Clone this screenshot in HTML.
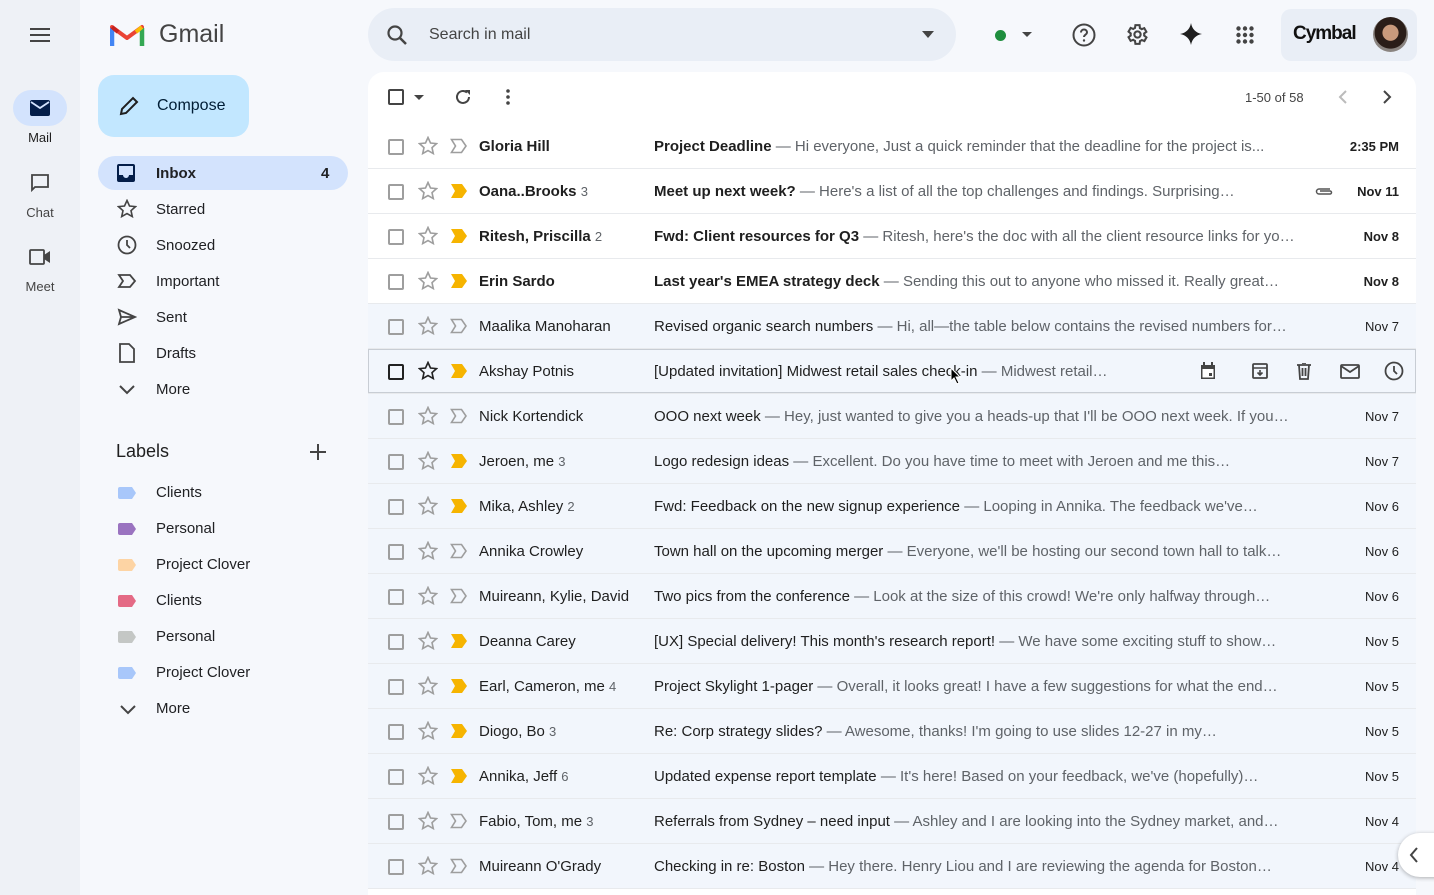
<!DOCTYPE html>
<html><head><meta charset="utf-8"><style>
*{box-sizing:border-box;margin:0;padding:0}
body{width:1434px;height:895px;overflow:hidden;background:#f6f8fc;font-family:"Liberation Sans",Arial,sans-serif;color:#1f1f1f;position:relative}
.rail{position:absolute;left:0;top:0;width:80px;height:895px;background:#eef1f6}
.abs{position:absolute}
.ri{position:absolute;left:0;width:80px;text-align:center;font-size:13px;color:#444}
.nav{position:absolute;left:98px;width:250px;height:34px;display:flex;align-items:center;font-size:15px;color:#202124;border-radius:17px}
.nav svg{position:absolute;left:19px}
.nav span{position:absolute;left:58px}
.main{position:absolute;left:368px;top:72px;width:1048px;height:823px;background:#fff;border-radius:16px 16px 0 0;overflow:hidden}
.row{position:absolute;left:0;width:1048px;height:45px;border-bottom:1px solid #e8eaed;font-size:15px;white-space:nowrap}
.row.rd{background:#f2f6fc}
.row>*{position:absolute;top:1px;line-height:44px}
.cb{left:20px;top:15px!important;width:16px;height:16px;border:2px solid #9e9e9e;border-radius:2px}
.st,.im{line-height:0!important}
.st{left:50px;top:12px!important}
.im{left:82px;top:14px!important}
.snd{left:111px;width:165px;overflow:hidden;color:#1f1f1f}
.sub{left:286px;overflow:hidden;text-overflow:ellipsis;color:#1f1f1f}
.sub i{font-style:normal;color:#5f6368}
.dt{right:17px;font-size:13px;color:#1f1f1f}
.ur .snd,.ur .sub b,.ur .dt{font-weight:bold}
.cnt{font-size:13px;color:#5f6368;font-weight:normal}
.lab{position:absolute;left:98px;width:250px;height:36px;font-size:15px;color:#202124}
.lab span{position:absolute;left:58px;top:9px}
.lab svg{position:absolute;left:20px;top:12px}
</style></head><body>
<div class="rail"></div>
<svg class="abs" style="left:29px;top:27px" width="22" height="16"><path d="M1 2h20M1 8h20M1 14h20" stroke="#444" stroke-width="2"/></svg>
<div class="abs" style="left:13px;top:90px;width:54px;height:36px;border-radius:18px;background:#d3e3fd"></div>
<svg class="abs" style="left:30px;top:100px" width="20" height="16"><rect x="0" y="0" width="20" height="16" rx="2" fill="#041e49"/><path d="M1 2l9 6 9-6" stroke="#d3e3fd" stroke-width="1.8" fill="none"/></svg>
<div class="ri" style="top:130px;color:#1f1f1f">Mail</div>
<svg class="abs" style="left:30px;top:173px" width="20" height="20"><path d="M2 2h16v12H5l-3 3z" fill="none" stroke="#444" stroke-width="1.8"/></svg>
<div class="ri" style="top:205px">Chat</div>
<svg class="abs" style="left:29px;top:249px" width="22" height="16"><rect x="1" y="1" width="14" height="14" rx="1" fill="none" stroke="#444" stroke-width="1.8"/><path d="M15 6l6-4v12l-6-4z" fill="#444"/></svg>
<div class="ri" style="top:279px">Meet</div>

<svg class="abs" style="left:110px;top:22px" width="35" height="26" viewBox="0 0 35 26"><path d="M2 24V5l15 11L32 5v19" fill="none" stroke="#ea4335" stroke-width="4" stroke-linejoin="round"/><path d="M2 24V6" stroke="#4285f4" stroke-width="4.5"/><path d="M32 24V6" stroke="#34a853" stroke-width="4.5"/><path d="M2 5l6 5" stroke="#c5221f" stroke-width="4"/><path d="M32 5l-6 5" stroke="#fbbc04" stroke-width="4"/></svg>
<div class="abs" style="left:159px;top:20px;font-size:25px;color:#444">Gmail</div>

<div class="abs" style="left:98px;top:75px;width:151px;height:62px;border-radius:16px;background:#c2e7ff"></div>
<svg class="abs" style="left:119px;top:96px" width="20" height="20"><path d="M2 18l1-5L14 2l4 4L7 17z" fill="none" stroke="#1f1f1f" stroke-width="2"/></svg>
<div class="abs" style="left:157px;top:97px;font-size:16px;color:#001d35">Compose</div>

<div class="nav" style="top:156px;background:#d3e3fd;font-weight:bold"><svg width="18" height="18" style="top:8px"><rect x="1" y="1" width="16" height="16" rx="1" fill="none" stroke="#041e49" stroke-width="2"/><path d="M1 11h5a3 3 0 006 0h5v6H1z" fill="#041e49"/></svg><span>Inbox</span><span style="left:223px">4</span></div>
<div class="nav" style="top:192px"><svg width="20" height="20" style="top:7px"><path d="M10 1.5l2.5 5.5 6 .6-4.5 4 1.3 6L10 14.6 4.7 17.6 6 11.6 1.5 7.6l6-.6z" fill="none" stroke="#444" stroke-width="1.6"/></svg><span>Starred</span></div>
<div class="nav" style="top:228px"><svg width="20" height="20" style="top:7px"><circle cx="10" cy="10" r="8.5" fill="none" stroke="#444" stroke-width="1.8"/><path d="M10 5v5l3 3" fill="none" stroke="#444" stroke-width="1.8"/></svg><span>Snoozed</span></div>
<div class="nav" style="top:264px"><svg width="20" height="20" style="top:7px"><path d="M2 4h11l5 6-5 6H2l4-6z" fill="none" stroke="#444" stroke-width="1.8"/></svg><span>Important</span></div>
<div class="nav" style="top:300px"><svg width="20" height="20" style="top:7px"><path d="M2 3l16 7-16 7 2-7z M4 10h14" fill="none" stroke="#444" stroke-width="1.8"/></svg><span>Sent</span></div>
<div class="nav" style="top:336px"><svg width="20" height="20" style="top:7px"><path d="M3 1h9l5 5v13H3z" fill="none" stroke="#444" stroke-width="1.8"/></svg><span>Drafts</span></div>
<div class="nav" style="top:372px"><svg width="20" height="20" style="top:8px"><path d="M3 6l7 7 7-7" fill="none" stroke="#444" stroke-width="2"/></svg><span>More</span></div>

<div class="abs" style="left:116px;top:441px;font-size:18px;color:#1f1f1f">Labels</div>
<svg class="abs" style="left:309px;top:443px" width="18" height="18"><path d="M9 1v16M1 9h16" stroke="#444" stroke-width="2"/></svg>
<div class="lab" style="top:475px"><svg width="20" height="12"><path d="M0 2a2 2 0 012-2h12l4 6-4 6H2a2 2 0 01-2-2z" fill="#a8c7fa"/></svg><span>Clients</span></div>
<div class="lab" style="top:511px"><svg width="20" height="12"><path d="M0 2a2 2 0 012-2h12l4 6-4 6H2a2 2 0 01-2-2z" fill="#9a73c0"/></svg><span>Personal</span></div>
<div class="lab" style="top:547px"><svg width="20" height="12"><path d="M0 2a2 2 0 012-2h12l4 6-4 6H2a2 2 0 01-2-2z" fill="#fdd4a4"/></svg><span>Project Clover</span></div>
<div class="lab" style="top:583px"><svg width="20" height="12"><path d="M0 2a2 2 0 012-2h12l4 6-4 6H2a2 2 0 01-2-2z" fill="#e46a85"/></svg><span>Clients</span></div>
<div class="lab" style="top:619px"><svg width="20" height="12"><path d="M0 2a2 2 0 012-2h12l4 6-4 6H2a2 2 0 01-2-2z" fill="#c4c7c5"/></svg><span>Personal</span></div>
<div class="lab" style="top:655px"><svg width="20" height="12"><path d="M0 2a2 2 0 012-2h12l4 6-4 6H2a2 2 0 01-2-2z" fill="#a8c7fa"/></svg><span>Project Clover</span></div>
<div class="lab" style="top:691px"><svg width="20" height="12" style="top:13px"><path d="M3 2l7 7 7-7" fill="none" stroke="#444" stroke-width="2"/></svg><span>More</span></div>

<div class="abs" style="left:368px;top:8px;width:588px;height:53px;border-radius:27px;background:#e9eef6"></div>
<svg class="abs" style="left:386px;top:24px" width="22" height="22"><circle cx="9" cy="9" r="6.5" fill="none" stroke="#444" stroke-width="2.2"/><path d="M14 14l6 6" stroke="#444" stroke-width="2.5"/></svg>
<div class="abs" style="left:429px;top:26px;font-size:16px;color:#444">Search in mail</div>
<svg class="abs" style="left:922px;top:31px" width="12" height="7"><path d="M0 0h12L6 7z" fill="#444"/></svg>
<div class="abs" style="left:995px;top:30px;width:11px;height:11px;border-radius:50%;background:#1e8e3e"></div>
<svg class="abs" style="left:1022px;top:32px" width="10" height="5"><path d="M0 0h10L5 5z" fill="#444"/></svg>
<svg class="abs" style="left:1072px;top:23px" width="24" height="24"><circle cx="12" cy="12" r="10.5" fill="none" stroke="#444" stroke-width="2"/><path d="M9 9.5a3 3 0 116 0c0 2-3 2.3-3 4.5" fill="none" stroke="#444" stroke-width="2"/><circle cx="12" cy="17.5" r="1.2" fill="#444"/></svg>
<svg class="abs" style="left:1125px;top:22px" width="25" height="25" viewBox="0 0 24 24"><path d="M19.4 13a7.5 7.5 0 000-2l2.1-1.6-2-3.5-2.5 1a7 7 0 00-1.7-1L15 3h-4l-.4 2.7a7 7 0 00-1.7 1l-2.5-1-2 3.5L6.5 11a7.5 7.5 0 000 2l-2.1 1.6 2 3.5 2.5-1a7 7 0 001.7 1L11 21h4l.4-2.7a7 7 0 001.7-1l2.5 1 2-3.5z" transform="translate(-1 0)" fill="none" stroke="#444" stroke-width="2"/><circle cx="12" cy="12" r="3" fill="none" stroke="#444" stroke-width="2"/></svg>
<svg class="abs" style="left:1180px;top:23px" width="22" height="22"><path d="M11 0C12 6 16 10 22 11 16 12 12 16 11 22 10 16 6 12 0 11 6 10 10 6 11 0z" fill="#1f1f1f"/></svg>
<svg class="abs" style="left:1236px;top:26px" width="18" height="18"><g fill="#444"><circle cx="2.5" cy="2.5" r="2.2"/><circle cx="9" cy="2.5" r="2.2"/><circle cx="15.5" cy="2.5" r="2.2"/><circle cx="2.5" cy="9" r="2.2"/><circle cx="9" cy="9" r="2.2"/><circle cx="15.5" cy="9" r="2.2"/><circle cx="2.5" cy="15.5" r="2.2"/><circle cx="9" cy="15.5" r="2.2"/><circle cx="15.5" cy="15.5" r="2.2"/></g></svg>
<div class="abs" style="left:1281px;top:9px;width:136px;height:52px;border-radius:10px;background:#e9eef6"></div>
<div class="abs" style="left:1293px;top:23px;font-size:19px;font-weight:bold;letter-spacing:-1px;color:#111">Cymbal</div>
<div class="abs" style="left:1373px;top:17px;width:35px;height:35px;border-radius:50%;background:radial-gradient(circle at 50% 45%,#c99a7c 0 30%,#2a1d18 32% 60%,#8a8480 62%)"></div>

<div class="main">
<div class="abs" style="left:20px;top:17px;width:16px;height:16px;border:2px solid #444;border-radius:2px"></div>
<svg class="abs" style="left:46px;top:23px" width="10" height="5"><path d="M0 0h10L5 5z" fill="#444"/></svg>
<svg class="abs" style="left:86px;top:16px" width="18" height="18"><path d="M15 9a6 6 0 11-2-4.5" fill="none" stroke="#444" stroke-width="2"/><path d="M11 2h5v5z" fill="#444"/></svg>
<svg class="abs" style="left:138px;top:16px" width="4" height="18"><circle cx="2" cy="3" r="1.8" fill="#444"/><circle cx="2" cy="9" r="1.8" fill="#444"/><circle cx="2" cy="15" r="1.8" fill="#444"/></svg>
<div class="abs" style="left:877px;top:18px;font-size:13px;color:#444">1-50 of 58</div>
<svg class="abs" style="left:970px;top:18px" width="10" height="14"><path d="M8 1L2 7l6 6" fill="none" stroke="#bbb" stroke-width="2"/></svg>
<svg class="abs" style="left:1014px;top:18px" width="10" height="14"><path d="M2 1l6 6-6 6" fill="none" stroke="#444" stroke-width="2"/></svg>
<div id="rows"></div>
</div>

<div class="abs" style="left:1398px;top:833px;width:60px;height:44px;border-radius:22px;background:#fff;box-shadow:0 1px 4px rgba(0,0,0,.3)"></div>
<svg class="abs" style="left:1409px;top:847px" width="10" height="16"><path d="M8 1L2 8l6 7" fill="none" stroke="#444" stroke-width="2"/></svg>

<script>
var D=[
[1,0,"Gloria Hill","","Project Deadline","Hi everyone, Just a quick reminder that the deadline for the project is...","2:35 PM",640],
[1,1,"Oana..Brooks","3","Meet up next week?","Here's a list of all the top challenges and findings. Surprising…","Nov 11",618],
[1,1,"Ritesh, Priscilla","2","Fwd: Client resources for Q3","Ritesh, here's the doc with all the client resource links for yo…","Nov 8",672],
[1,1,"Erin Sardo","","Last year's EMEA strategy deck","Sending this out to anyone who missed it. Really great…","Nov 8",652],
[0,0,"Maalika Manoharan","","Revised organic search numbers","Hi, all—the table below contains the revised numbers for…","Nov 7",672],
[0,1,"Akshay Potnis","","[Updated invitation] Midwest retail sales check-in","Midwest retail…","",490],
[0,0,"Nick Kortendick","","OOO next week","Hey, just wanted to give you a heads-up that I'll be OOO next week. If you…","Nov 7",664],
[0,1,"Jeroen, me","3","Logo redesign ideas","Excellent. Do you have time to meet with Jeroen and me this…","Nov 7",652],
[0,1,"Mika, Ashley","2","Fwd: Feedback on the new signup experience","Looping in Annika. The feedback we've…","Nov 6",640],
[0,0,"Annika Crowley","","Town hall on the upcoming merger","Everyone, we'll be hosting our second town hall to talk…","Nov 6",672],
[0,0,"Muireann, Kylie, David","","Two pics from the conference","Look at the size of this crowd! We're only halfway through…","Nov 6",664],
[0,1,"Deanna Carey","","[UX] Special delivery! This month's research report!","We have some exciting stuff to show…","Nov 5",664],
[0,1,"Earl, Cameron, me","4","Project Skylight 1-pager","Overall, it looks great! I have a few suggestions for what the end…","Nov 5",666],
[0,1,"Diogo, Bo","3","Re: Corp strategy slides?","Awesome, thanks! I'm going to use slides 12-27 in my…","Nov 5",598],
[0,1,"Annika, Jeff","6","Updated expense report template","It's here! Based on your feedback, we've (hopefully)…","Nov 5",642],
[0,0,"Fabio, Tom, me","3","Referrals from Sydney – need input","Ashley and I are looking into the Sydney market, and…","Nov 4",664],
[0,0,"Muireann O'Grady","","Checking in re: Boston","Hey there. Henry Liou and I are reviewing the agenda for Boston…","Nov 4",656]];
var h="";
var star='<svg width="20" height="20"><path d="M10 1.5l2.5 5.5 6 .6-4.5 4 1.3 6L10 14.6 4.7 17.6 6 11.6 1.5 7.6l6-.6z" fill="none" stroke="SC" stroke-width="1.6"/></svg>';
D.forEach(function(r,i){
 var hov=i==5;
 var cls="row"+(r[0]?" ur":" rd");
 var st=hov?"background:#f2f6fc;box-shadow:inset 0 0 0 1px #c8cdd4;":"";
 h+='<div class="'+cls+'" style="top:'+(52+45*i)+'px;'+st+'">';
 h+='<div class="cb" style="'+(hov?'border-color:#222':'')+'"></div>';
 h+='<div class="st">'+star.replace("SC",hov?"#222":"#9e9e9e")+'</div>';
 h+='<div class="im">'+(r[1]?'<svg width="18" height="16"><path d="M1 1h11l5 7-5 7H1l4-7z" fill="#f6b400"/></svg>':'<svg width="18" height="16"><path d="M1.5 1.5h10l4.5 6.5-4.5 6.5h-10l4-6.5z" fill="none" stroke="#9e9e9e" stroke-width="1.6"/></svg>')+'</div>';
 h+='<div class="snd">'+r[2]+(r[3]?' <span class="cnt">'+r[3]+'</span>':'')+'</div>';
 h+='<div class="sub" style="width:'+r[7]+'px"><b style="font-weight:'+(r[0]?'bold':'normal')+'">'+r[4]+'</b> <i>— '+r[5]+'</i></div>';
 if(r[6])h+='<div class="dt">'+r[6]+'</div>';
 if(i==1)h+='<svg style="position:absolute;left:946px;top:17px" width="20" height="10"><path d="M16 3H5a2.5 2.5 0 000 5h11a1.5 1.5 0 000-3H6" fill="none" stroke="#555" stroke-width="1.5"/></svg>';
 if(hov){
  h+='<svg style="position:absolute;left:832px;top:13px" width="16" height="18"><rect x="1" y="3" width="14" height="14" fill="#444"/><rect x="2.5" y="7" width="11" height="8.5" fill="#fff"/><rect x="9" y="11" width="3" height="3" fill="#444"/><path d="M4 0v4M12 0v4" stroke="#444" stroke-width="2"/></svg>';
  h+='<svg style="position:absolute;left:884px;top:14px" width="16" height="16"><rect x="1" y="1" width="14" height="14" rx="1" fill="none" stroke="#444" stroke-width="1.8"/><path d="M1 5h14M8 7v5M5.5 9.5L8 12l2.5-2.5" fill="none" stroke="#444" stroke-width="1.6"/></svg>';
  h+='<svg style="position:absolute;left:929px;top:14px" width="14" height="17"><path d="M0 2h14M5 0h4M2 2l1 14h8l1-14M5.5 5v8M8.5 5v8" fill="none" stroke="#444" stroke-width="1.8"/></svg>';
  h+='<svg style="position:absolute;left:972px;top:15px" width="20" height="15"><rect x="1" y="1" width="18" height="13" rx="1" fill="none" stroke="#444" stroke-width="1.8"/><path d="M1 2l9 6 9-6" fill="none" stroke="#444" stroke-width="1.8"/></svg>';
  h+='<svg style="position:absolute;left:1016px;top:12px" width="20" height="20"><circle cx="10" cy="10" r="8.5" fill="none" stroke="#444" stroke-width="1.8"/><path d="M10 5v5l3 3" fill="none" stroke="#444" stroke-width="1.8"/></svg>';
  h+='<svg style="position:absolute;left:582px;top:18px" width="12" height="18"><path d="M1 1v13l3-3 3 6 2-1-3-6h4z" fill="#000" stroke="#fff" stroke-width="1"/></svg>';
 }
 h+='</div>';
});
document.getElementById("rows").innerHTML=h;
</script>
</body></html>
